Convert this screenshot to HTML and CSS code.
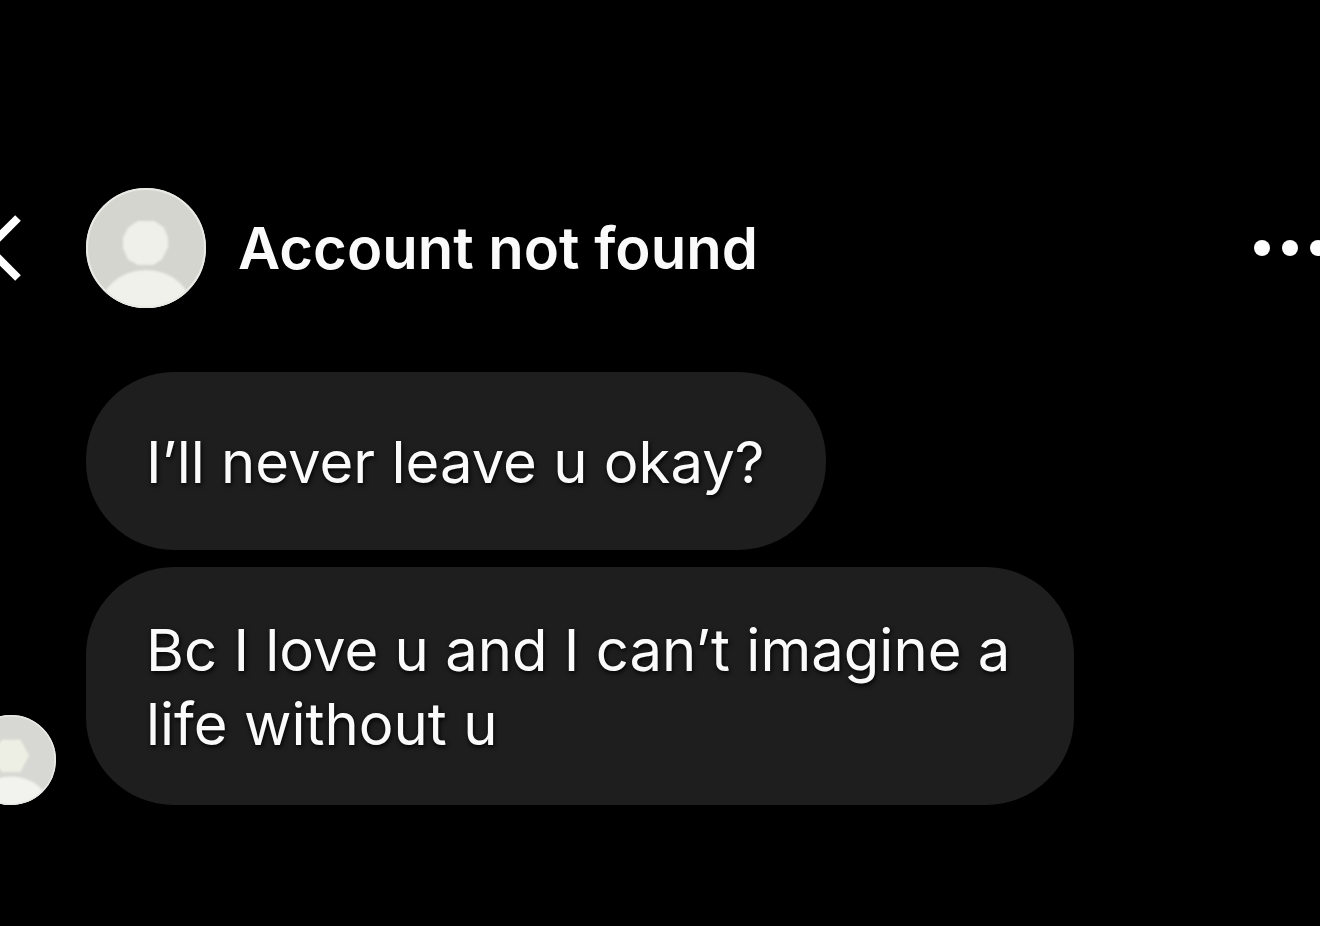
FILE: index.html
```html
<!DOCTYPE html>
<html lang="en">
<head>
<meta charset="utf-8">
<meta name="viewport" content="width=device-width, initial-scale=1">
<title>Account not found</title>
<link rel="stylesheet" href="styles.css">
</head>
<body>
<header class="header">
  <button class="back" aria-label="Back"><svg width="22" height="68" viewBox="0 0 22 68"><path d="M18 4L-12 34L18 64"/></svg></button>
  <svg class="avatar" viewBox="0 0 120 120" aria-hidden="true">
    <defs>
      <clipPath id="disc"><circle cx="60" cy="60" r="60"/></clipPath>
      <filter id="soft"><feGaussianBlur stdDeviation="1.2"/></filter>
    </defs>
    <g clip-path="url(#disc)">
      <rect width="120" height="120" fill="#d4d5cf"/>
      <path d="M52 34H68L77 40L81 50V59L75 71L67 76H52L43 71L38 60V50L43 40Z" fill="#eff0ea" stroke="#eff0ea" stroke-width="2" stroke-linejoin="round" filter="url(#soft)"/>
      <ellipse cx="60" cy="122" rx="46" ry="40" fill="#f0f1ea" filter="url(#soft)"/>
    </g>
    <circle class="rim" cx="60" cy="60" r="59"/>
  </svg>
  <h1 class="title">Account not found</h1>
  <button class="more" aria-label="More options"><svg width="66" height="18" viewBox="0 0 66 18"><circle cx="8" cy="9" r="8"/><circle cx="36" cy="9" r="8"/><circle cx="64" cy="9" r="8"/></svg></button>
</header>
<main class="thread">
  <div class="row"><p class="bubble">I’ll never leave u okay?</p></div>
  <div class="row">
    <svg class="avatar avatar-small" viewBox="0 0 120 120" aria-hidden="true">
      <g clip-path="url(#disc)">
        <rect width="120" height="120" fill="#d7d8d3"/>
        <path d="M48 34H72L83 54L72 75H48L37 54Z" fill="#eeefe4" stroke="#eeefe4" stroke-width="2" stroke-linejoin="round" filter="url(#soft)"/>
        <ellipse cx="60" cy="122" rx="50" ry="40" fill="#f2f3ee" filter="url(#soft)"/>
      </g>
      <circle class="rim" cx="60" cy="60" r="59"/>
    </svg>
    <p class="bubble">Bc I love u and I can’t imagine a life without u</p>
  </div>
</main>
</body>
</html>
```
FILE: styles.css
```css
* { box-sizing: border-box; }
body { margin: 0; background: #000; color: #fafafa; font-family: Inter, Roboto, sans-serif; overflow-x: hidden; }
button { border: 0; padding: 0; background: none; color: inherit; display: flex; }
.header { display: flex; align-items: center; padding-top: 188px; }
.back { width: 86px; }
.back path { fill: none; stroke: #fff; stroke-width: 8; }
.avatar { width: 120px; height: 120px; flex: none; }
.rim { fill: none; stroke: #e9eae5; stroke-width: 2; }
.title { flex: 1; margin: 0 0 0 32px; font-size: 58px; line-height: 72px; font-weight: 600; }
.more svg { fill: #fff; }
.thread { display: flex; flex-direction: column; gap: 17px; padding: 64px 246px 120px 86px; }
.row { display: flex; align-items: flex-end; }
.avatar-small { width: 90px; height: 90px; margin-left: -120px; margin-right: 30px; }
.bubble { display: flex; align-items: center; min-height: 178px; margin: 0; padding: 46px 62px 44px 60px; border-radius: 88px; background: #1e1e1e; font-size: 58px; line-height: 74px; text-shadow: 1px 2px 5px #000; }
```
